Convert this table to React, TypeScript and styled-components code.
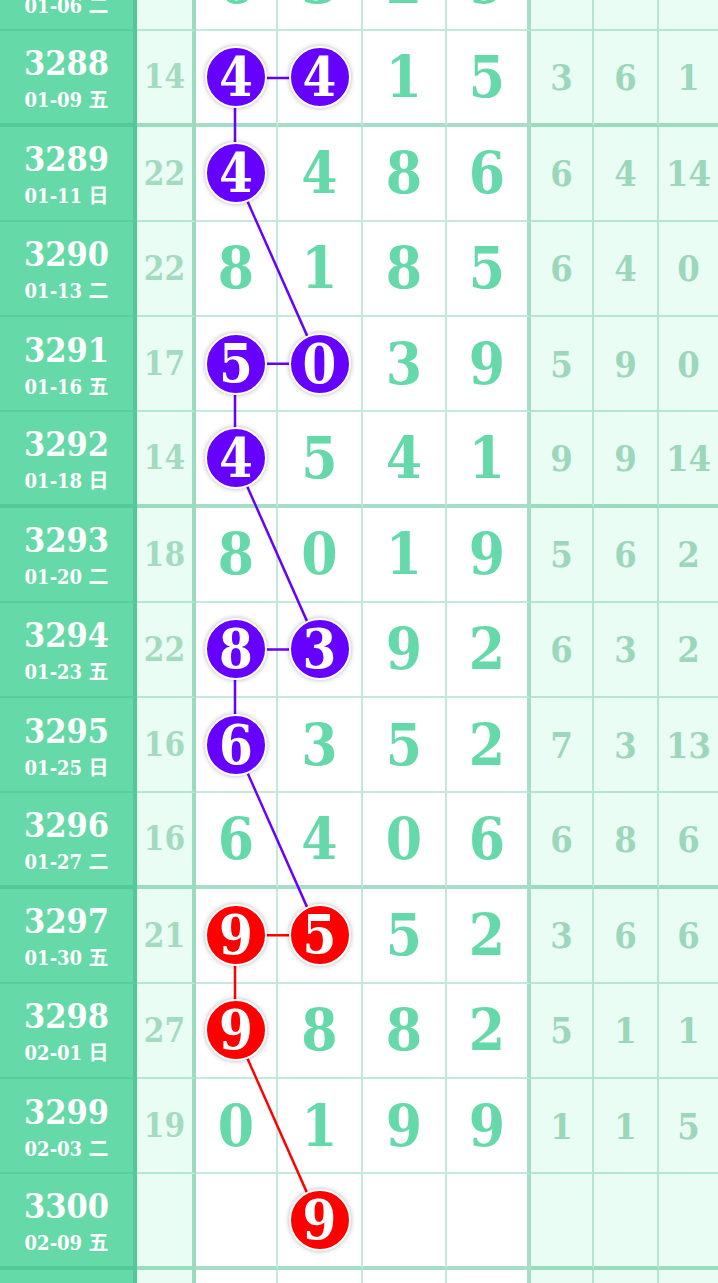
import React from 'react';
import styled, { createGlobalStyle } from 'styled-components';

const ROW_H = 95.25;
const COL_X = [235, 319.5];
const PURPLE = '#6600ff';
const RED = '#ff0000';

const GlobalStyle = createGlobalStyle`
  html, body {
    margin: 0;
    padding: 0;
    background: #ffffff;
    overflow: hidden;
  }
  body {
    font-family: "DejaVu Serif", "Noto Sans CJK SC", serif;
    font-stretch: condensed;
  }
`;

const THIN = 'rgba(60, 180, 130, 0.3)';
const THICK = 'rgba(60, 180, 130, 0.45)';

const Board = styled.div`
  position: relative;
  width: 718px;
  margin-top: -64px;
`;

const Row = styled.div<{ $thick?: boolean }>`
  display: grid;
  grid-template-columns: 137px 59px 82px 85px 84px 84px 63px 65px 59px;
  height: ${ROW_H}px;

  & > div {
    border-bottom: ${(p) => (p.$thick ? `4px solid ${THICK}` : `2px solid ${THIN}`)};
  }
`;

const Cell = styled.div`
  box-sizing: border-box;
  display: flex;
  align-items: center;
  justify-content: center;
  font-weight: 700;
  line-height: 1;
`;

const IssueCell = styled(Cell)`
  flex-direction: column;
  gap: 10px;
  padding-top: 2px;
  background: #66d9a9;
  color: #ffffff;
  border-right: 4px solid ${THICK};
`;

const Issue = styled.span`
  font-size: 34px;
`;

const DateText = styled.span`
  font-size: 20px;
`;

const SumCell = styled(Cell)`
  background: #e9fdf4;
  color: #a3dbc1;
  font-size: 33px;
  border-right: 4px solid ${THICK};
`;

const DigitCell = styled(Cell)<{ $edge?: boolean }>`
  background: #ffffff;
  color: #66d9aa;
  font-size: 58px;
  border-right: ${(p) => (p.$edge ? `4px solid ${THICK}` : `2px solid ${THIN}`)};
`;

const TailCell = styled(Cell)<{ $last?: boolean }>`
  background: #e9fdf4;
  color: #9cd7bb;
  font-size: 36px;
  border-right: ${(p) => (p.$last ? 'none' : `2px solid ${THIN}`)};
`;

const Ball = styled.span<{ $color: string }>`
  position: relative;
  z-index: 2;
  box-sizing: border-box;
  width: 62px;
  height: 62px;
  border-radius: 50%;
  border: 2.5px solid #ffffff;
  background: ${(p) => p.$color};
  box-shadow: 0 0 5px rgba(0, 0, 0, 0.3);
  color: #ffffff;
  font-size: 54px;
  display: flex;
  align-items: center;
  justify-content: center;
`;

const Links = styled.svg`
  position: absolute;
  top: 0;
  left: 0;
  pointer-events: none;
  z-index: 1;
`;

type RowData = {
  issue: string;
  date: string;
  sum: string;
  digits: string[];
  tails: string[];
  balls?: { col: number; color: string }[];
};

const rows: RowData[] = [
  { issue: '3287', date: '01-06 二', sum: '20', digits: ['6', '3', '2', '9'], tails: ['2', '5', '3'] },
  { issue: '3288', date: '01-09 五', sum: '14', digits: ['4', '4', '1', '5'], tails: ['3', '6', '1'], balls: [{ col: 0, color: PURPLE }, { col: 1, color: PURPLE }] },
  { issue: '3289', date: '01-11 日', sum: '22', digits: ['4', '4', '8', '6'], tails: ['6', '4', '14'], balls: [{ col: 0, color: PURPLE }] },
  { issue: '3290', date: '01-13 二', sum: '22', digits: ['8', '1', '8', '5'], tails: ['6', '4', '0'] },
  { issue: '3291', date: '01-16 五', sum: '17', digits: ['5', '0', '3', '9'], tails: ['5', '9', '0'], balls: [{ col: 0, color: PURPLE }, { col: 1, color: PURPLE }] },
  { issue: '3292', date: '01-18 日', sum: '14', digits: ['4', '5', '4', '1'], tails: ['9', '9', '14'], balls: [{ col: 0, color: PURPLE }] },
  { issue: '3293', date: '01-20 二', sum: '18', digits: ['8', '0', '1', '9'], tails: ['5', '6', '2'] },
  { issue: '3294', date: '01-23 五', sum: '22', digits: ['8', '3', '9', '2'], tails: ['6', '3', '2'], balls: [{ col: 0, color: PURPLE }, { col: 1, color: PURPLE }] },
  { issue: '3295', date: '01-25 日', sum: '16', digits: ['6', '3', '5', '2'], tails: ['7', '3', '13'], balls: [{ col: 0, color: PURPLE }] },
  { issue: '3296', date: '01-27 二', sum: '16', digits: ['6', '4', '0', '6'], tails: ['6', '8', '6'] },
  { issue: '3297', date: '01-30 五', sum: '21', digits: ['9', '5', '5', '2'], tails: ['3', '6', '6'], balls: [{ col: 0, color: RED }, { col: 1, color: RED }] },
  { issue: '3298', date: '02-01 日', sum: '27', digits: ['9', '8', '8', '2'], tails: ['5', '1', '1'], balls: [{ col: 0, color: RED }] },
  { issue: '3299', date: '02-03 二', sum: '19', digits: ['0', '1', '9', '9'], tails: ['1', '1', '5'] },
  { issue: '3300', date: '02-09 五', sum: '', digits: ['', '9', '', ''], tails: ['', '', ''], balls: [{ col: 1, color: RED }] },
  { issue: '', date: '', sum: '', digits: ['', '', '', ''], tails: ['', '', ''] },
];

// [fromRow, fromCol, toRow, toCol, colour]
const links: [number, number, number, number, string][] = [
  [1, 0, 1, 1, PURPLE],
  [1, 0, 2, 0, PURPLE],
  [2, 0, 4, 1, PURPLE],
  [4, 0, 4, 1, PURPLE],
  [4, 0, 5, 0, PURPLE],
  [5, 0, 7, 1, PURPLE],
  [7, 0, 7, 1, PURPLE],
  [7, 0, 8, 0, PURPLE],
  [8, 0, 10, 1, PURPLE],
  [10, 0, 10, 1, RED],
  [10, 0, 11, 0, RED],
  [11, 0, 13, 1, RED],
];

const centerY = (row: number) => row * ROW_H + ROW_H / 2 - 1;

export default function App() {
  return (
    <>
      <GlobalStyle />
      <Board>
        {rows.map((r, i) => (
          <Row key={i} $thick={i % 4 === 1}>
            <IssueCell>
              {r.issue && <Issue>{r.issue}</Issue>}
              {r.date && <DateText>{r.date}</DateText>}
            </IssueCell>
            <SumCell>{r.sum}</SumCell>
            {r.digits.map((d, c) => {
              const ball = r.balls?.find((b) => b.col === c);
              return (
                <DigitCell key={c} $edge={c === 3}>
                  {ball ? <Ball $color={ball.color}>{d}</Ball> : d}
                </DigitCell>
              );
            })}
            {r.tails.map((t, c) => (
              <TailCell key={c} $last={c === 2}>
                {t}
              </TailCell>
            ))}
          </Row>
        ))}
        <Links width={718} height={rows.length * ROW_H}>
          {links.map(([r1, c1, r2, c2, color], i) => (
            <line
              key={i}
              x1={COL_X[c1]}
              y1={centerY(r1)}
              x2={COL_X[c2]}
              y2={centerY(r2)}
              stroke={color}
              strokeWidth={2.5}
            />
          ))}
        </Links>
      </Board>
    </>
  );
}
